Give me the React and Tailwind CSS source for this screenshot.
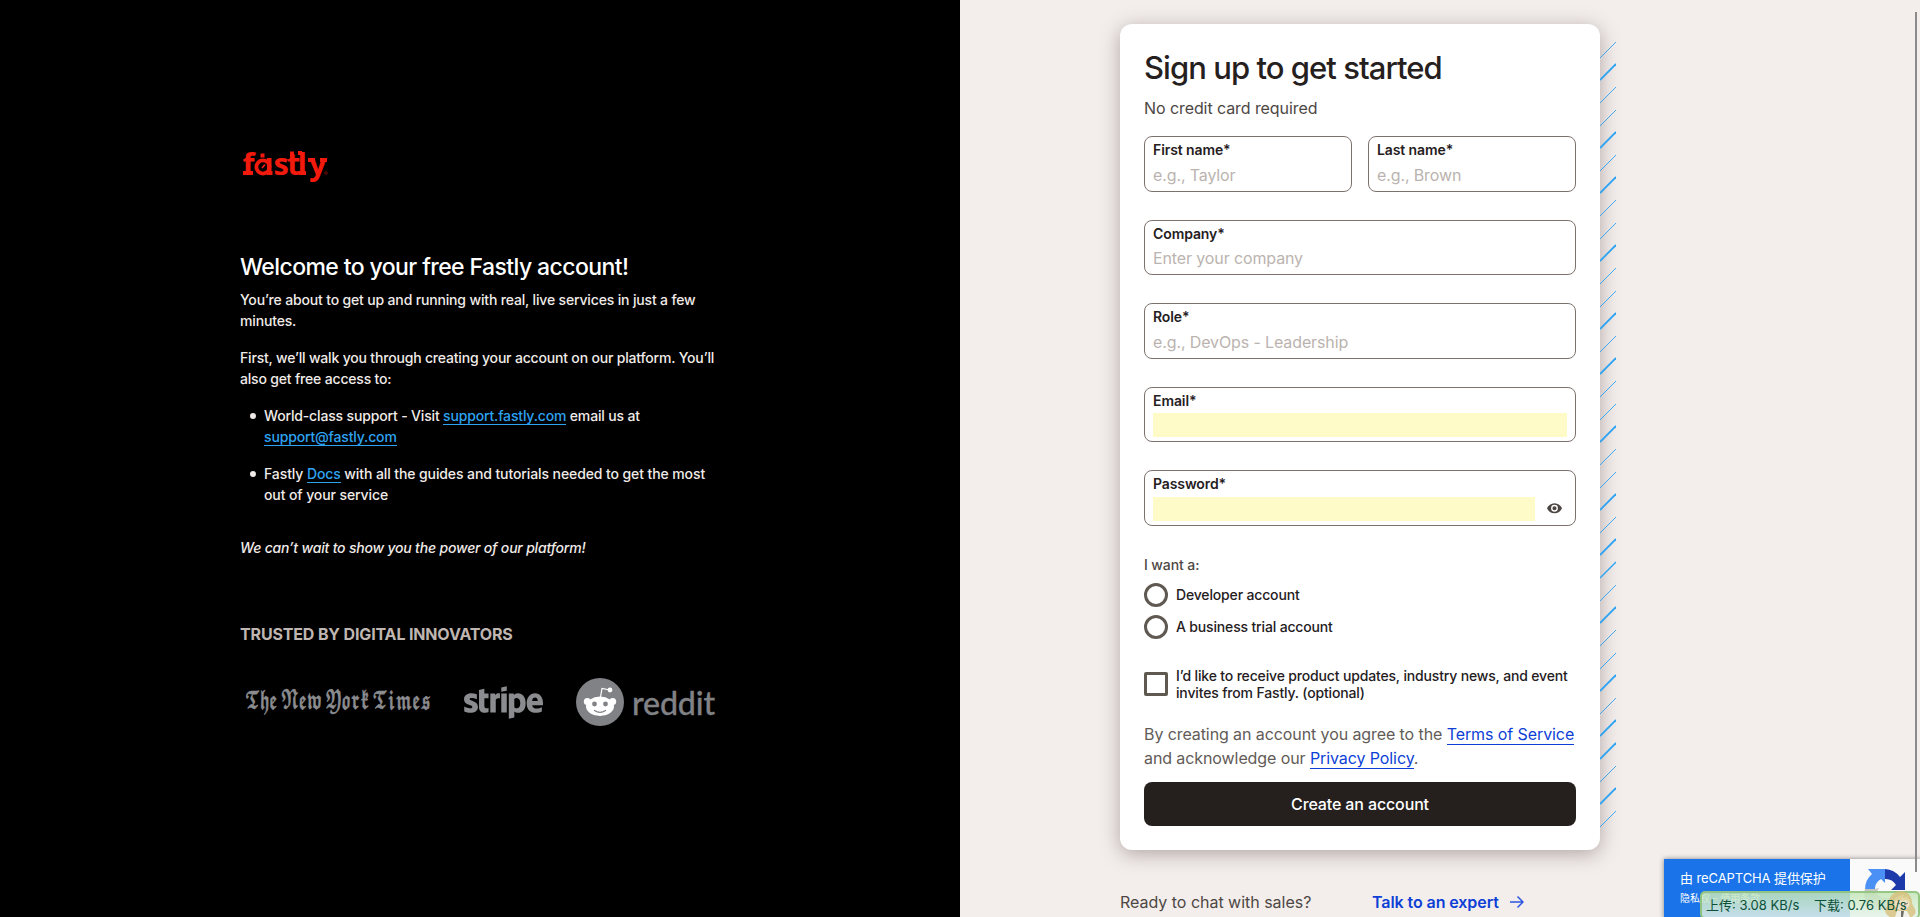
import React from "react";
import { FaStripe } from "react-icons/fa";

const SANS = "font-[Inter,'Noto_Sans_CJK_SC',sans-serif]";

const stripes = [
  [42, 1], [64, 2], [87, 1], [110, 1], [132, 2], [155, 1], [177, 2], [200, 1], [223, 1], [245, 2],
  [268, 1], [291, 1], [313, 2], [336, 1], [358, 2], [381, 1], [404, 1], [426, 2], [449, 1], [472, 1],
  [494, 2], [517, 1], [539, 2], [562, 1.6], [585, 1], [607, 2], [630, 1], [653, 1], [675, 2], [698, 1],
  [720, 2], [743, 2], [766, 1], [788, 2], [811, 1],
];

function Stripes() {
  return (
    <svg className="absolute top-4 left-[480px] z-10 h-[800px] w-4" viewBox="0 40 16 800" aria-hidden="true">
      {stripes.map(([y, w]) => (
        <path key={y} d={`M0 ${y + 16}L16 ${y}`} stroke="#2ea3f2" strokeWidth={w * 0.9} fill="none" />
      ))}
    </svg>
  );
}

function FastlyLogo() {
  return (
    <svg className="h-[50px] w-[94px]" viewBox="0 -7 94 50" fill="#f2190d">
      <g fontFamily="'Open Sans'" fontWeight="700" fontSize="31">
        <text x="0.500" y="26">f</text>
        <text x="31.500 45 55.500 67" y="26">stly</text>
      </g>
      <rect x="1" y="22" width="10" height="4" />
      <circle cx="21" cy="18" r="6.600" fill="none" stroke="#f2190d" strokeWidth="3.800" />
      <rect x="25" y="9" width="4.500" height="17" />
      <rect x="25" y="22" width="5.500" height="4" />
      <rect x="18.500" y="4.500" width="4" height="4" />
      <path d="M20 19l3-3.500" stroke="#f2190d" strokeWidth="1.800" />
      <path d="M56 2h4v4h-4zM57 22h7v4h-7zM66 9h7v4h-7zM78 9h7v4h-7zM48 2.500h4v8h-4z" />
      <circle cx="84" cy="24" r="1.300" fill="none" stroke="#9c120b" strokeWidth="0.700" />
    </svg>
  );
}

function Field({ label, placeholder, filled, children, className = "" }) {
  return (
    <div className={`flex h-[55.600px] flex-col rounded-lg border border-[#7d716d] px-2 pt-[2px] ${className}`}>
      <label className="text-sm leading-[21px] font-semibold tracking-[-0.1px] text-[#25201e]">{label}</label>
      <div className="mt-[2px] flex items-center">
        {filled ? (
          <div className="mt-[0.4px] h-6 flex-1 bg-[#fffbc8]" />
        ) : (
          <span className="mt-[0.6px] text-base leading-6 tracking-[-0.120px] text-[#bbb3af]">{placeholder}</span>
        )}
        {children}
      </div>
    </div>
  );
}

function Radio({ label }) {
  return (
    <label className="flex h-6 items-center gap-2 text-sm font-medium tracking-[-0.160px] text-[#25201e]">
      <span className="h-6 w-6 rounded-full border-3 border-[#5f5952]" />
      {label}
    </label>
  );
}

function SignUpCard() {
  return (
    <div className="relative">
      <Stripes />
      <div className="relative flex h-[826px] w-[480px] flex-col rounded-xl bg-white p-6 shadow-[0_4px_20px_rgba(60,40,40,0.36)]">
        <h1 className="text-[31px] leading-[40px] font-medium tracking-[-0.950px] text-[#25201e]">Sign up to get started</h1>
        <p className="mt-2 text-base leading-6 tracking-[-0.080px] text-[#4d4744]">No credit card required</p>
        <form className="mt-4 flex flex-col gap-7">
          <div className="flex gap-4">
            <Field label="First name*" placeholder="e.g., Taylor" className="flex-1" />
            <Field label="Last name*" placeholder="e.g., Brown" className="flex-1" />
          </div>
          <Field label="Company*" placeholder="Enter your company" />
          <Field label="Role*" placeholder="e.g., DevOps - Leadership" />
          <Field label="Email*" filled />
          <Field label="Password*" filled>
            <svg className="mr-[5px] ml-[12px] h-[10.500px] w-[15px]" viewBox="0 0 22 15" fill="#4d4744">
              <path fillRule="evenodd" d="M11 0C6 0 1.730 3.110 0 7.500 1.730 11.890 6 15 11 15s9.270-3.110 11-7.500C20.270 3.110 16 0 11 0zm0 12.500a5 5 0 1 1 0-10 5 5 0 0 1 0 10zm0-8a3 3 0 1 0 0 6 3 3 0 0 0 0-6z" />
            </svg>
          </Field>
        </form>
        <div className="mt-7 text-sm leading-[21px] font-medium tracking-[-0.100px] text-[#4d4744]">I want a:</div>
        <div className="mt-2 flex flex-col gap-2">
          <Radio label="Developer account" />
          <Radio label="A business trial account" />
        </div>
        <label className="mt-7 flex items-center gap-2 text-sm leading-[17px] font-medium tracking-[-0.160px] text-[#25201e]">
          <span className="h-6 w-6 shrink-0 rounded-[2px] border-3 border-[#5f5952]" />
          <span className="flex-1">I’d like to receive product updates, industry news, and event invites from Fastly. (optional)</span>
        </label>
        <p className="mt-auto whitespace-nowrap text-base leading-6 tracking-[-0.090px] text-[#625b57]">
          By creating an account you agree to the <a className="border-b border-[#0d3fd6] text-[#0d3fd6]">Terms of Service</a>
          <br />
          and acknowledge our <a className="border-b border-[#0d3fd6] text-[#0d3fd6]">Privacy Policy</a>.
        </p>
        <button className="mt-3 h-11 shrink-0 rounded-lg bg-[#25201e] text-base font-medium tracking-[-0.130px] text-white">Create an account</button>
      </div>
    </div>
  );
}

function RedditMark() {
  return (
    <svg className="h-12 w-12" viewBox="0 0 48 48">
      <circle cx="24" cy="24" r="24" fill="#818286" />
      <path d="M24.500 19l1.500-8.500 8 1.500" fill="none" stroke="#fff" strokeWidth="1.200" />
      <g fill="#fff">
        <circle cx="34" cy="12" r="2.400" />
        <circle cx="11.300" cy="23.500" r="3.500" />
        <circle cx="36.700" cy="23.500" r="3.500" />
        <ellipse cx="24" cy="28.300" rx="14" ry="9.700" />
      </g>
      <circle cx="18.500" cy="26" r="2.400" fill="#818286" />
      <circle cx="29.500" cy="26" r="2.400" fill="#818286" />
      <path d="M18.500 32.500q5.500 3.600 11 0" fill="none" stroke="#818286" strokeWidth="1.300" strokeLinecap="round" />
    </svg>
  );
}

function Brands() {
  return (
    <div className="mt-[30px] flex h-[52px] items-center">
      <svg className="ml-[5px] h-[52px] w-[188px] shrink-0 overflow-visible" viewBox="0 -8 188 52" fill="#8b8c8f" stroke="#8b8c8f" strokeWidth="0.700">
        <text x="0" y="25" fontFamily="'DejaVu Math TeX Gyre'" fontSize="25" textLength="186" lengthAdjust="spacingAndGlyphs" wordSpacing="-2">𝕿𝖍𝖊 𝕹𝖊𝖜 𝖄𝖔𝖗𝖐 𝕿𝖎𝖒𝖊𝖘</text>
      </svg>
      <FaStripe className="ml-[31px] h-[79px] w-[79px] shrink-0 text-[#8b8c8f]" />
      <div className="ml-[33px] shrink-0"><RedditMark /></div>
      <svg className="ml-[8px] h-[52px] w-[84px] shrink-0 overflow-visible" viewBox="0 -8 84 52" fill="#818286">
        <text x="0" y="30.500" fontFamily="Lato" fontSize="32" stroke="#818286" strokeWidth="0.300" textLength="83" lengthAdjust="spacingAndGlyphs">reddit</text>
      </svg>
    </div>
  );
}

function Link({ children }) {
  return <a className="border-b border-[#2ea3f2] text-[#2ea3f2]">{children}</a>;
}

function Item({ children }) {
  return (
    <li className="flex">
      <span className="mt-2 mr-[8px] ml-[10px] h-[6px] w-[6px] shrink-0 rounded-full bg-[#f0ebe8]" />
      <span>{children}</span>
    </li>
  );
}

function Intro() {
  return (
    <section className="h-full w-[960px] bg-black pt-[142px] pl-[240px] text-sm leading-[21px] font-medium tracking-[-0.160px] text-[#f0ebe8]">
      <div className="w-[480px]">
        <div className="ml-[2px] h-[50px]"><FastlyLogo /></div>
        <h2 className="mt-[59px] text-[23px] leading-8 font-medium tracking-[-0.590px] text-white">Welcome to your free Fastly account!</h2>
        <p className="mt-[6px]">You’re about to get up and running with real, live services in just a few minutes.</p>
        <p className="mt-4 tracking-[-0.180px]">First, we’ll walk you through creating your account on our platform. You’ll also get free access to:</p>
        <ul className="mt-4 flex flex-col gap-4">
          <Item>World-class support - Visit <Link>support.fastly.com</Link> email us at <Link>support@fastly.com</Link></Item>
          <Item><span className="tracking-[-0.100px]">Fastly <Link>Docs</Link> with all the guides and tutorials needed to get the most out of your service</span></Item>
        </ul>
        <p className="mt-8 tracking-[-0.190px] italic">We can’t wait to show you the power of our platform!</p>
        <h3 className="mt-16 text-base leading-6 font-bold tracking-[-0.150px] text-[#bfb6b1]">TRUSTED BY DIGITAL INNOVATORS</h3>
        <Brands />
      </div>
    </section>
  );
}

function Recaptcha() {
  return (
    <div className="absolute top-[859px] left-[1664px] flex h-[60px] w-[256px] bg-[#fafafa] shadow-[0_0_5px_gray]">
      <div className="w-[186px] bg-[#1a73e8] pt-[9px] pl-4 text-white">
        <div className="text-[13px] leading-5 tracking-[-0.100px]">由 reCAPTCHA 提供保护</div>
        <div className="mt-[2px] text-[10px] leading-4">隐私权 - 使用条款</div>
      </div>
      <svg className="mt-[9px] ml-[14px] h-[42px] w-[42px]" viewBox="0 0 42 42">
        <path d="M41 4v18H27l5-5a12 12 0 0 0-11-6V1a20 20 0 0 1 15 8z" fill="#1c3aa9" />
        <path d="M4 1h17v14l-4-4a12 12 0 0 0-6 11H1A20 20 0 0 1 8 6z" fill="#4a90f5" />
        <path d="M1 21h10l4-1-3 5a14 14 0 0 0 22 0l7 6A20 20 0 0 1 1 21z" fill="#c4c4c4" />
      </svg>
    </div>
  );
}

function Mascot() {
  return (
    <svg className="absolute right-[1px] bottom-0 h-[26px] w-[34px]" viewBox="0 0 34 26" opacity="0.75">
      <path d="M7 26C0 22 1 16 6 14 5 6 10 1 17 0c8 0 12 5 12 12 1 4 5 6 3 11l-3 3z" fill="#d9bd76" />
      <ellipse cx="19" cy="13" rx="7.500" ry="6.500" fill="#f8dfc5" />
      <path d="M9 13c2-7 8-9 12-9l-3 6 5-5c3 2 5 5 5 9l-4-5-12 1z" fill="#e5cd8b" />
      <path d="M14 13q2-2 3 0M21 14l4-2M18 17q1 1 2 0" fill="none" stroke="#754a38" strokeWidth="1" />
      <path d="M12 26l2-6h10l3 6z" fill="#f5f1e9" />
      <path d="M18 20h3l-1 6h-2z" fill="#4a443f" />
    </svg>
  );
}

function SpeedOverlay() {
  return (
    <div className="absolute top-[891px] left-[1700px] h-[28px] w-[220px] rounded-[5px] border-2 border-[#83bd6c]/80 bg-linear-to-b from-[#c4e6b8]/85 to-[#e4f2ea]/85">
      <Mascot />
      <div className="relative flex pl-1 text-[13px] leading-6 whitespace-nowrap text-[#0b5038]">
        <span className="w-[108px]">上传: 3.08 KB/s</span>
        <span>下载: 0.76 KB/s</span>
      </div>
    </div>
  );
}

export default function App() {
  return (
    <main className={`relative flex h-[917px] w-[1920px] overflow-hidden bg-[#f3eeec] ${SANS}`}>
      <Intro />
      <section className="h-full flex-1 pt-6 pl-40">
        <SignUpCard />
        <div className="mt-10 flex w-[480px] items-center text-base leading-6">
          <span className="w-[252px] tracking-[-0.020px] text-[#4d4744]">Ready to chat with sales?</span>
          <a className="flex items-center gap-[11px] font-semibold tracking-[-0.080px] text-[#0d3fd6]">
            Talk to an expert
            <svg className="h-[14px] w-[14px]" viewBox="0 0 14 14" fill="none" stroke="#2b55df" strokeWidth="1.500">
              <path d="M0 7h13M7.500 1.500L13 7l-5.500 5.500" />
            </svg>
          </a>
        </div>
      </section>
      <Recaptcha />
      <SpeedOverlay />
      <div className="absolute top-3 left-[1915px] h-[860px] w-[2px] bg-[#8b8b8b]" />
    </main>
  );
}
